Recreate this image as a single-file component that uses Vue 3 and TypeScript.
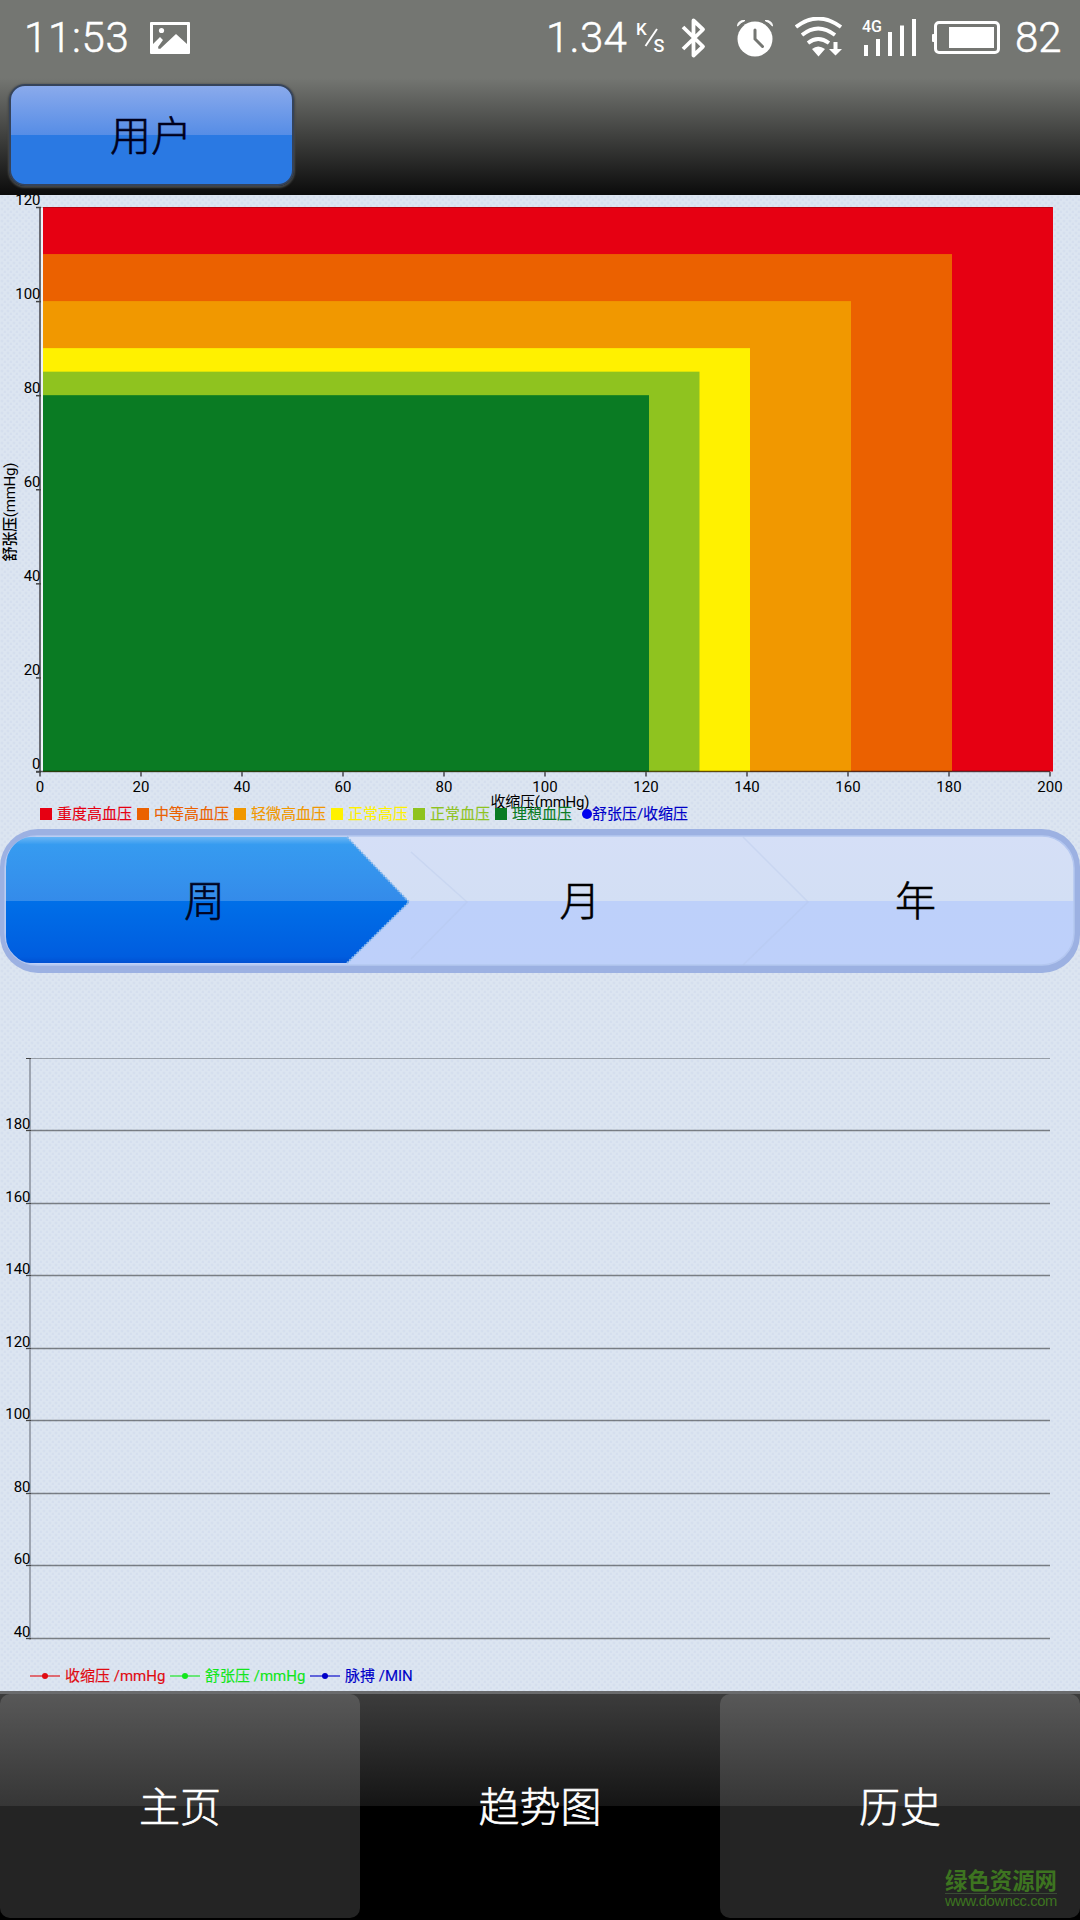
<script setup lang="ts">
interface Zone { label: string; color: string; sys: number; dia: number; legendX: number }

const zones: Zone[] = [
  { label: '重度高血压', color: '#e60012', sys: 200, dia: 120, legendX: 40 },
  { label: '中等高血压', color: '#eb6100', sys: 180, dia: 110, legendX: 137 },
  { label: '轻微高血压', color: '#f19800', sys: 160, dia: 100, legendX: 234 },
  { label: '正常高压', color: '#fff100', sys: 140, dia: 90, legendX: 331 },
  { label: '正常血压', color: '#8fc31f', sys: 130, dia: 85, legendX: 413 },
  { label: '理想血压', color: '#0a7b23', sys: 120, dia: 80, legendX: 495 },
]
const sysTicks = [0, 20, 40, 60, 80, 100, 120, 140, 160, 180, 200]
const diaTicks = [0, 20, 40, 60, 80, 100, 120]
const zoneX = (v: number): number => 40 + v * 5.05
const zoneY = (v: number): number => 576.5 - v * 4.704

const trendTicks = [40, 60, 80, 100, 120, 140, 160, 180, 200]
const trendY = (v: number): number => Math.round(666 - (v - 40) * 3.627)

const series = [
  { label: '收缩压 /mmHg', color: '#e00b12', x: 30 },
  { label: '舒张压 /mmHg', color: '#12e61c', x: 170 },
  { label: '脉搏 /MIN', color: '#0000c8', x: 310 },
]
const tabs = [
  { label: '主页', active: false },
  { label: '趋势图', active: true },
  { label: '历史', active: false },
]
</script>

<template>
  <div class="screen">
    <div class="status">
      <span class="time">11:53</span>
      <svg class="photo" width="40" height="32" viewBox="0 0 40 32">
        <path fill="#fff" fill-rule="evenodd" d="M1 0H39Q40 0 40 1V31Q40 32 39 32H1Q0 32 0 31V1Q0 0 1 0ZM3 3V22L10 15L13 18L8 25L10 27L26 12L37 22V3Z" />
        <circle cx="11.500" cy="8.500" r="2.600" fill="#fff" />
        <path d="M8.500 26.500L15 19.500" stroke="#747672" stroke-width="1.600" />
      </svg>
      <div class="right">
        <span class="speed">1.34</span>
        <svg class="unit" width="32" height="40" viewBox="0 0 32 40">
          <text x="0" y="17" font-size="17" font-weight="500" fill="#fff">K</text>
          <path d="M9.500 28L21 11" stroke="#fff" stroke-width="1.900" />
          <text x="17.500" y="34" font-size="18" font-weight="500" fill="#fff">S</text>
        </svg>
        <svg class="bt" width="26" height="42" viewBox="0 0 26 42">
          <path d="M2 10L22 29.500L12.500 38.500V3.500L22 12.500L2 32" fill="none" stroke="#fff" stroke-width="3.800" stroke-linejoin="round" />
        </svg>
        <svg class="alarm" width="36" height="38" viewBox="0 0 36 38">
          <circle cx="18" cy="20" r="17.500" fill="#fff" />
          <path d="M.5 7Q1 1 8 1.500Q4 3 .5 7ZM35.500 7Q35 1 28 1.500Q32 3 35.500 7Z" fill="#fff" stroke="#fff" />
          <path d="M18 11V20L25.500 27.500" fill="none" stroke="#747672" stroke-width="3" stroke-linecap="round" />
        </svg>
        <svg class="wifi" width="48" height="40" viewBox="0 0 48 40">
          <g fill="none" stroke="#fff" stroke-width="3.800">
            <path d="M1 10Q23 -7 46 10" /><path d="M7 18Q23 5 40 18" /><path d="M13 26Q23 18 34 26" />
          </g>
          <path d="M17 32Q23 27 30 32L23.500 39.500ZM38.500 25H42.500V32H47L40.500 38.500L34 32H38.500Z" fill="#fff" />
        </svg>
        <svg class="signal" width="56" height="38" viewBox="0 0 56 38">
          <text x="0" y="14" font-size="16" font-weight="500" fill="#fff">4G</text>
          <path d="M4 27V38M16 21V38M28 14V38M40 7.500V38M52 1V38" stroke="#fff" stroke-width="4" />
        </svg>
        <svg class="battery" width="68" height="34" viewBox="0 0 68 34">
          <rect x="3.500" y="1.500" width="63" height="30" rx="3.500" fill="none" stroke="#fff" stroke-width="3" />
          <rect x="17" y="6" width="45" height="21" fill="#fff" />
          <rect x="0" y="13" width="3" height="8" rx="1" fill="#fff" />
        </svg>
        <span class="pct">82</span>
      </div>
    </div>

    <header class="header"><button class="user">用户</button></header>

    <main class="body">
      <svg class="chart" width="1080" height="634" viewBox="0 0 1080 634">
        <rect
          v-for="z in zones" :key="z.label" x="43" :y="zoneY(z.dia)"
          :width="z.sys * 5.05" :height="z.dia * 4.704" :fill="z.color"
        />
        <rect x="41" y="12" width="2" height="564" fill="#fff" opacity=".55" />
        <path d="M40 12.500H1052" stroke="#000" stroke-opacity=".2" fill="none" />
        <path d="M40 12V581" stroke="#6a6c74" stroke-width="2" />
        <path d="M36 576.500H1050" stroke="#000" stroke-opacity=".6" stroke-width="1.500" />
        <path v-for="t in sysTicks" :key="'s' + t" :d="`M${zoneX(t)} 577v4.500`" stroke="#6a6c74" stroke-width="2" />
        <path v-for="t in diaTicks" :key="'d' + t" :d="`M36 ${zoneY(t) + .5}h5`" stroke="#444" stroke-width="1.500" />
        <text v-for="t in diaTicks" :key="'dl' + t" x="40.500" :y="Math.floor(zoneY(t) - 2)" text-anchor="end">{{ t }}</text>
        <text v-for="t in sysTicks" :key="'sl' + t" :x="zoneX(t)" y="597" text-anchor="middle">{{ t }}</text>
        <text x="540" y="612" text-anchor="middle" textLength="99">收缩压(mmHg)</text>
        <text transform="translate(15 317) rotate(-90)" text-anchor="middle" textLength="99"><tspan font-weight="500">舒张压</tspan>(mmHg)</text>
        <g v-for="z in zones" :key="'l' + z.label" :fill="z.color">
          <rect :x="z.legendX" y="613" width="12" height="12" />
          <text class="key" :x="z.legendX + 17" y="624" :stroke="z.color">{{ z.label }}</text>
        </g>
        <circle cx="587" cy="619" r="5" fill="#00e" />
        <text class="key" x="592" y="624" fill="#0000c8" stroke="#0000c8" textLength="96">舒张压/收缩压</text>
      </svg>

      <div class="segments">
        <svg class="seg-bg" width="1080" height="144" viewBox="0 0 1080 144">
          <defs>
            <linearGradient id="base" x1="0" y1="0" x2="0" y2="1">
              <stop offset="0" stop-color="#d5dff7" /><stop offset=".505" stop-color="#d3dff4" />
              <stop offset=".505" stop-color="#bdd0fa" /><stop offset="1" stop-color="#bed0fa" />
            </linearGradient>
            <linearGradient id="sel" x1="0" y1="0" x2="0" y2="1">
              <stop offset="0" stop-color="#6ab6f4" /><stop offset=".06" stop-color="#369bf0" />
              <stop offset=".51" stop-color="#348bea" /><stop offset=".51" stop-color="#006fe8" />
              <stop offset=".95" stop-color="#005ddf" /><stop offset="1" stop-color="#0050d2" />
            </linearGradient>
          </defs>
          <rect width="1080" height="144" rx="38" fill="#9cb1e2" />
          <rect x="5" y="7" width="1069" height="129" rx="32" fill="url(#base)" stroke="#b4c7f0" stroke-width="1.500" />
          <path d="M30 8H347L409 73L347 134H30Q22 134 14 126Q6 118 6 108V38Q6 24 14 16Q22 8 30 8Z" fill="url(#sel)" />
          <path d="M347 8L409 73L347 134" fill="none" stroke="#85b6ea" stroke-width="2" stroke-dasharray="2 1.500" />
          <path d="M411 23L467 73L411 130M743 8L808 73L743 136" fill="none" stroke="#b5c5e8" stroke-opacity=".35" stroke-width="1.500" />
        </svg>
        <span class="seg week">周</span>
        <span class="seg month">月</span>
        <span class="seg year">年</span>
      </div>

      <svg class="chart" width="1080" height="718" viewBox="0 0 1080 718">
        <path
          v-for="t in trendTicks" :key="t" :d="`M26 ${trendY(t) - .5}H1050`"
          stroke="#000" :stroke-opacity="t === 200 ? .3 : .45" :stroke-width="t === 200 ? 1 : 1.400"
        />
        <path d="M30 85V667" stroke="#9da4b0" stroke-width="2" />
        <path v-for="t in trendTicks" :key="'t' + t" :d="`M26 ${trendY(t) - .5}h5`" stroke="#444" />
        <text v-for="t in trendTicks.slice(0, -1)" :key="'l' + t" x="30.500" :y="trendY(t) - 2" text-anchor="end">{{ t }}</text>
        <g v-for="s in series" :key="s.label" :fill="s.color">
          <path :d="`M${s.x} 703h30`" :stroke="s.color" stroke-opacity=".75" stroke-width="1.500" />
          <circle :cx="s.x + 15" cy="703" r="3" />
          <text class="key" :x="s.x + 35" y="708" :stroke="s.color">{{ s.label }}</text>
        </g>
      </svg>
    </main>

    <nav class="tabs">
      <div v-for="t in tabs" :key="t.label" class="tab" :class="{ active: t.active }">{{ t.label }}</div>
      <div class="mark">
        <strong>绿色资源网</strong>
        <span>www.downcc.com</span>
      </div>
    </nav>
  </div>
</template>

<style>
body { margin: 0; background: #000; }
</style>

<style scoped>
.screen {
  width: 1080px; height: 1920px; overflow: hidden; display: flex; flex-direction: column;
  font-family: Roboto, "Noto Sans CJK SC", sans-serif;
}
.status { height: 78px; flex: none; background: #747672; display: flex; color: #fff; align-items: flex-start; }
.status svg { flex: none; display: block; }
.time, .speed, .pct {
  font-size: 42px; line-height: 50px; font-weight: 300; margin-top: 13px; white-space: nowrap;
  -webkit-text-stroke: .5px #fff;
}
.time { width: 127px; padding-left: 24px; box-sizing: border-box; letter-spacing: .7px; }
.photo { margin: 22px 0 0 23px; }
.right { margin-left: auto; display: flex; align-items: flex-start; }
.speed { width: 90px; letter-spacing: .3px; margin-left: -1px; }
.unit { margin-top: 18px; }
.bt { margin: 17px 0 0 13px; }
.alarm { margin: 19px 0 0 30px; }
.wifi { margin: 17px 0 0 22px; }
.signal { margin: 18px 0 0 19px; }
.battery { margin: 21px 0 0 14px; }
.pct { margin-left: 15px; width: 65px; }

.header {
  height: 117px; flex: none; display: flex; padding: 6px 0 0 9px; box-sizing: border-box;
  background: linear-gradient(#747672, #3f403e 50%, #0b0b0b);
}
.user {
  width: 285px; height: 102px; box-sizing: border-box; padding: 0 1px 4px 0; color: #00001c;
  font: 300 41px/1 "Noto Sans CJK SC", sans-serif; -webkit-text-stroke: .6px #00001c;
  border: 2px solid #35435a; border-radius: 16px;
  background: linear-gradient(#8aaaec, #568de6 50%, #2a79e3 50%, #2a79e3);
  box-shadow: 0 1px 2px 1px #454747;
}
.body {
  height: 1496px; flex: none; display: flex; flex-direction: column; background-color: #dce5f1;
  background-image:
    radial-gradient(circle at 2px 2px, rgba(200, 211, 231, .5) 0, transparent 2px),
    radial-gradient(circle at 5px 5px, rgba(200, 211, 231, .5) 0, transparent 2px);
  background-size: 6px 6px;
}
.chart { display: block; flex: none; font-size: 15px; }
.key { stroke-width: .15px; }
.segments { position: relative; height: 144px; flex: none; display: flex; }
.seg-bg { position: absolute; inset: 0; }
.seg {
  position: relative; display: flex; align-items: center; justify-content: center; box-sizing: border-box;
  font-size: 41px; font-weight: 300; color: #000; line-height: 1; padding-top: 2px;
  -webkit-text-stroke: .6px currentColor;
}
.week { width: 409px; color: #000422; }
.month { width: 342px; }
.year { width: 329px; }

.tabs {
  position: relative; height: 229px; flex: none; display: flex; box-sizing: border-box;
  border-top: 3px solid #6a6b6d;
  background: linear-gradient(#3c3c3c, #151515 112px, #000 112px);
}
.tab {
  width: 360px; height: 224px; display: flex; align-items: center; justify-content: center;
  color: #fff; font-size: 41px; font-weight: 300; border-radius: 10px; box-sizing: border-box; padding-bottom: 5px;
  -webkit-text-stroke: .6px #fff;
  background: linear-gradient(#585858, #363636 112px, #242424 112px);
}
.tab.active { background: none; }
.mark {
  position: absolute; left: 945px; top: 1px; padding-top: 170px; width: 112px; color: #3d7420;
  display: flex; flex-direction: column;
}
.mark strong { font: 700 22.400px/28px "Noto Sans CJK SC", sans-serif; border-bottom: 1px solid #3a4b35; white-space: nowrap; }
.mark span { font: 14.800px/15px "Liberation Sans", sans-serif; letter-spacing: -.4px; white-space: nowrap; }
</style>
